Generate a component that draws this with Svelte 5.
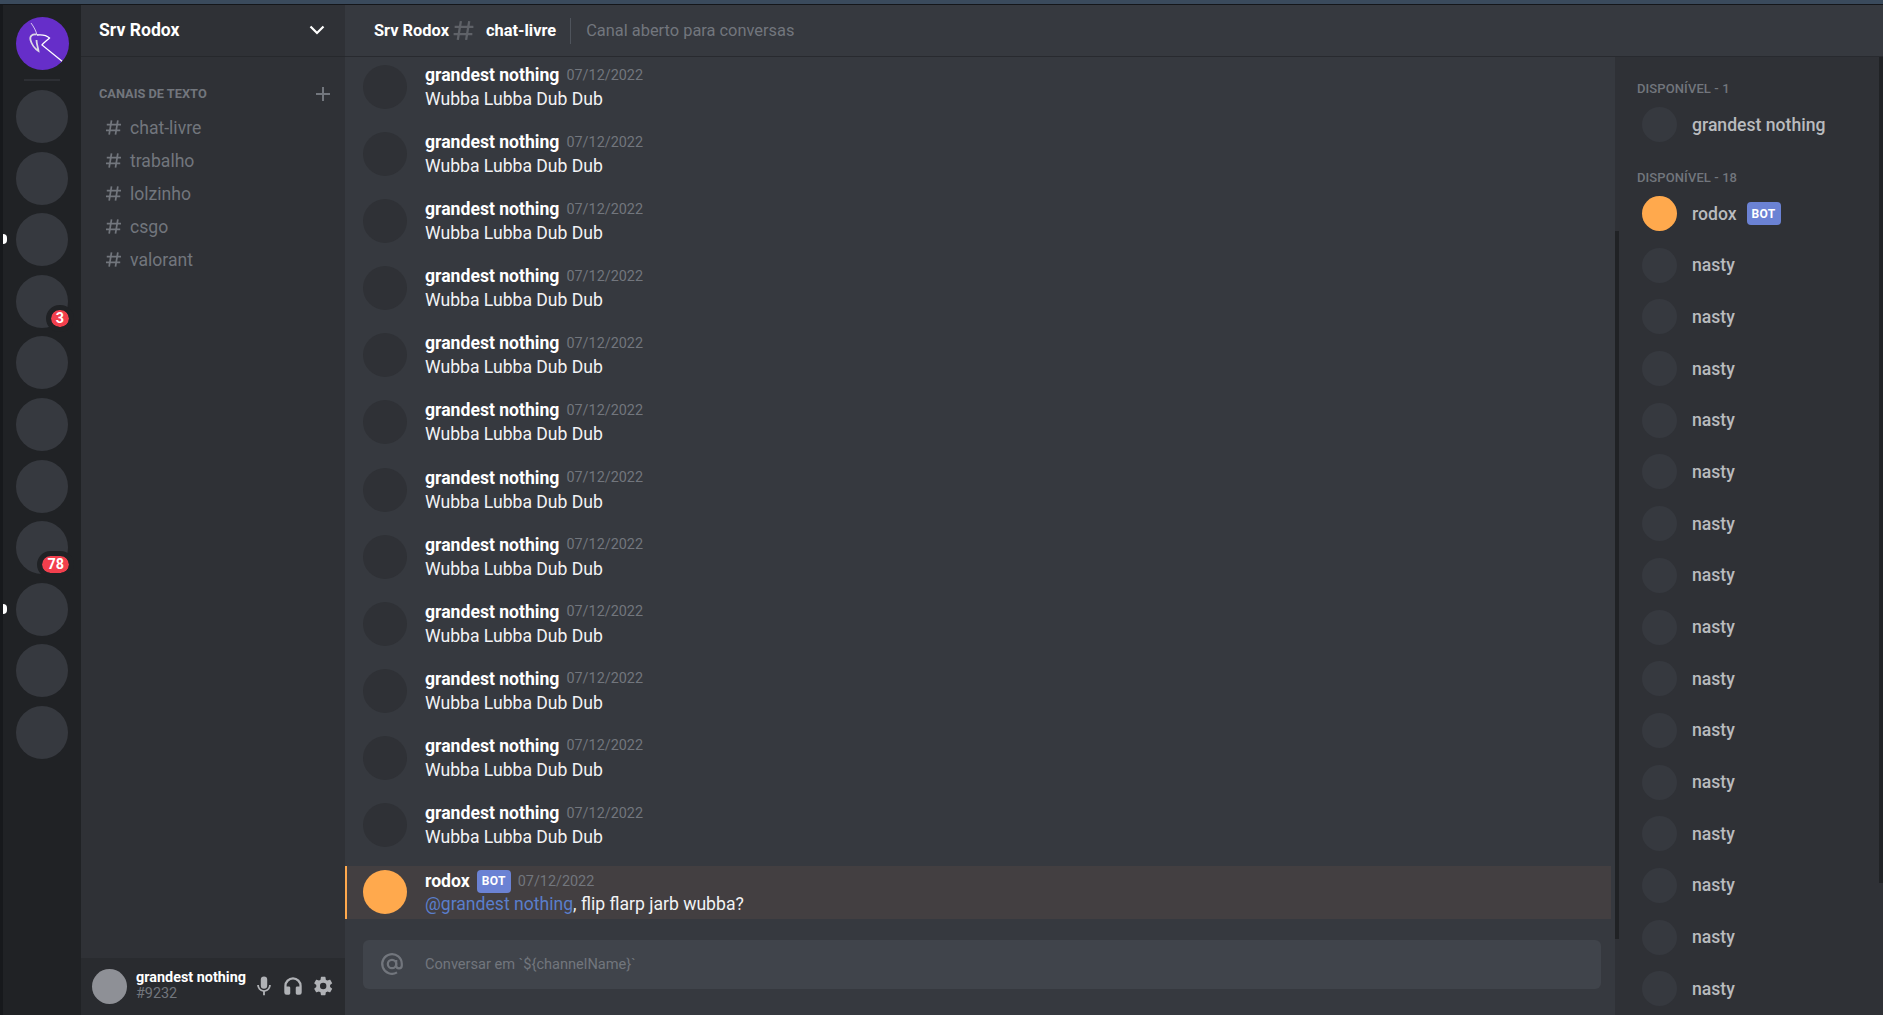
<script lang="ts">
	const servers = [
		{ badge: null, pill: false },
		{ badge: null, pill: false },
		{ badge: null, pill: true },
		{ badge: "3", pill: false },
		{ badge: null, pill: false },
		{ badge: null, pill: false },
		{ badge: null, pill: false },
		{ badge: "78", pill: false },
		{ badge: null, pill: true },
		{ badge: null, pill: false },
		{ badge: null, pill: false }
	]
	const channels = ["chat-livre", "trabalho", "lolzinho", "csgo", "valorant"]
	const messages = Array.from({ length: 12 }, (_, i) => i)
	const nasties = Array.from({ length: 15 }, (_, i) => i)
</script>

{#snippet hash(size)}
	<svg width={size} height={size} viewBox="0 0 24 24" class="hash">
		<path d="M9.5 3 6.5 21M17.5 3l-3 18M3.5 8.5h18M2.5 15.5h18" fill="none" stroke="currentColor" stroke-width="2.2" />
	</svg>
{/snippet}

<div class="page">
	<div class="topline"></div>
	<div class="app">
		<nav class="servers">
			<div class="logo">
				<svg width="53" height="53" viewBox="0 0 53 53">
					<path d="M15 6C18 10 20 14 21 18" stroke="#f2eefa" stroke-width="0.8" fill="none" />
					<path d="M20.500 17.500C16 17 13.500 19 14.500 23C15.500 27 19 32 22.500 34C22 30 20.500 27 20.500 23" stroke="#dcd8e6" stroke-width="1.800" fill="none" />
					<path d="M21 18C26 17.500 31 18.500 33.500 21C31 23.500 28 25.500 26 28L47 45" stroke="#fff" stroke-width="1.300" fill="none" />
				</svg>
			</div>
			<div class="divider"></div>
			{#each servers as s}
				<div class="server">
					{#if s.pill}<span class="pill"></span>{/if}
					<div class="circle"></div>
					{#if s.badge}<span class="badge">{s.badge}</span>{/if}
				</div>
			{/each}
		</nav>

		<aside class="sidebar">
			<header class="srv-head">
				<span>Srv Rodox</span>
				<svg width="20" height="20" viewBox="0 0 20 20"><path d="M3.5 6.500 10 13l6.500-6.500" fill="none" stroke="#fff" stroke-width="2.200" /></svg>
			</header>
			<div class="cat">
				<span>CANAIS DE TEXTO</span>
				<svg width="14" height="14" viewBox="0 0 14 14"><path d="M7 0v14M0 7h14" stroke="#72767d" stroke-width="2" /></svg>
			</div>
			<ul class="channels">
				{#each channels as c}
					<li>{@render hash(19)}<span>{c}</span></li>
				{/each}
			</ul>
			<footer class="user">
				<div class="user-av"></div>
				<div class="user-txt">
					<strong>grandest nothing</strong>
					<span>#9232</span>
				</div>
				<div class="user-icons">
					<svg width="22" height="22" viewBox="0 0 24 24" fill="#b0b2b6"><path d="M12 1.500a3.500 3.500 0 0 0-3.500 3.500v6.500a3.500 3.500 0 0 0 7 0V5A3.500 3.500 0 0 0 12 1.500Z" /><path d="M4.500 11h2a5.500 5.500 0 0 0 11 0h2a7.500 7.500 0 0 1-6.500 7.400V22h-2v-3.600A7.500 7.500 0 0 1 4.500 11Z" /></svg>
					<svg width="22" height="22" viewBox="0 0 24 24" fill="#b0b2b6"><path d="M12 2.500a9.500 9.500 0 0 0-9.500 9.500v7a2.500 2.500 0 0 0 2.500 2.500h2.500A1.500 1.500 0 0 0 9 20v-6a1.500 1.500 0 0 0-1.500-1.500H5V12a7 7 0 0 1 14 0v.5h-2.500A1.500 1.500 0 0 0 15 14v6a1.500 1.500 0 0 0 1.500 1.500H19a2.500 2.500 0 0 0 2.500-2.500v-7A9.500 9.500 0 0 0 12 2.500Z" /></svg>
					<svg width="22" height="22" viewBox="0 0 24 24" fill="#b0b2b6"><path fill-rule="evenodd" d="M19.700 13a7.800 7.800 0 0 0 0-2l2.100-1.600a.5.5 0 0 0 .1-.7l-2-3.400a.5.5 0 0 0-.6-.2l-2.500 1a7.500 7.500 0 0 0-1.700-1l-.4-2.700a.5.5 0 0 0-.5-.4h-4a.5.5 0 0 0-.5.4l-.4 2.700a7.500 7.500 0 0 0-1.700 1l-2.500-1a.5.5 0 0 0-.6.2l-2 3.400a.5.5 0 0 0 .1.700L4.700 11a7.800 7.800 0 0 0 0 2l-2.100 1.600a.5.5 0 0 0-.1.700l2 3.400a.5.5 0 0 0 .6.2l2.500-1a7.500 7.500 0 0 0 1.700 1l.4 2.700a.5.5 0 0 0 .5.400h4a.5.5 0 0 0 .5-.4l.4-2.700a7.500 7.500 0 0 0 1.700-1l2.500 1a.5.5 0 0 0 .6-.2l2-3.400a.5.5 0 0 0-.1-.7ZM12.200 15.500a3.500 3.500 0 1 1 0-7 3.500 3.500 0 0 1 0 7Z" /></svg>
				</div>
			</footer>
		</aside>

		<div class="right">
			<header class="top">
				<strong>Srv Rodox</strong>
				{@render hash(25)}
				<strong class="chan">chat-livre</strong>
				<span class="sep"></span>
				<span class="topic">Canal aberto para conversas</span>
			</header>
			<div class="body">
				<main class="chat">
					<div class="messages">
						{#each messages as m}
							<div class="msg">
								<div class="av"></div>
								<div class="txt">
									<div class="meta"><strong>grandest nothing</strong><time>07/12/2022</time></div>
									<p>Wubba Lubba Dub Dub</p>
								</div>
							</div>
						{/each}
						<div class="msg mention">
							<div class="av orange"></div>
							<div class="txt">
								<div class="meta"><strong>rodox</strong><span class="bot">BOT</span><time>07/12/2022</time></div>
								<p><span class="at">@grandest nothing</span>, flip flarp jarb wubba?</p>
							</div>
						</div>
					</div>
					<div class="inputbar">
						<svg width="24" height="24" viewBox="0 0 24 24" fill="none" stroke="#72767d" stroke-width="2.200"><circle cx="12" cy="12" r="4.200" /><path d="M16.200 8v5.500a2.800 2.800 0 0 0 5.600 0V12A9.800 9.800 0 1 0 17 20.400" /></svg>
						<span>Conversar em `${"{"}channelName}`</span>
					</div>
					<div class="scroll"></div>
				</main>
				<aside class="members">
					<h3 class="first">DISPONÍVEL - 1</h3>
					<div class="member"><div class="m-av"></div><span>grandest nothing</span></div>
					<h3>DISPONÍVEL - 18</h3>
					<div class="member"><div class="m-av bot-av"></div><span>rodox</span><span class="bot">BOT</span></div>
					{#each nasties as n}
						<div class="member"><div class="m-av"></div><span>nasty</span></div>
					{/each}
					<div class="scroll2"></div>
				</aside>
			</div>
		</div>
	</div>
</div>

<style>
	:global(body) {
		margin: 0;
		background: #36393f;
		overflow: hidden;
	}
	* {
		box-sizing: border-box;
	}
	.page {
		height: 1015px;
		width: 1883px;
		display: flex;
		flex-direction: column;
		font-family: Roboto, sans-serif;
		color: #fff;
		overflow: hidden;
	}
	.topline {
		height: 5px;
		flex: none;
		background: #3a4a5c;
		border-bottom: 1px solid #14161a;
	}
	.app {
		flex: 1;
		min-height: 0;
		display: flex;
	}
	.servers {
		width: 81px;
		flex: none;
		background: #202225;
		border-left: 3px solid #17191c;
		padding: 12px 0 0 13px;
	}
	.logo {
		width: 53px;
		height: 53px;
		border-radius: 50%;
		background: #662ec9;
		overflow: hidden;
	}
	.logo svg {
		display: block;
	}
	.divider {
		width: 36px;
		height: 2px;
		background: #2d2f34;
		margin: 9px 0 9px 8px;
	}
	.server {
		position: relative;
		height: 52.8px;
		margin-bottom: 8.8px;
		width: 52px;
	}
	.circle {
		width: 52px;
		height: 53px;
		border-radius: 50%;
		background: #36393f;
	}
	.pill {
		position: absolute;
		left: -13px;
		top: 21px;
		width: 4px;
		height: 10px;
		background: #fff;
		border-radius: 0 5px 5px 0;
	}
	.badge {
		position: absolute;
		right: -6px;
		bottom: -4px;
		min-width: 8px;
		height: 17px;
		padding: 0 5px;
		box-sizing: content-box;
		border: 5px solid #202225;
		border-radius: 14px;
		background: #f23f4d;
		background-clip: padding-box;
		font-size: 14.4px;
		font-weight: 700;
		line-height: 17px;
		text-align: center;
	}
	.sidebar {
		width: 264px;
		flex: none;
		background: #2f3136;
		display: flex;
		flex-direction: column;
	}
	.srv-head {
		height: 52px;
		flex: none;
		display: flex;
		align-items: center;
		justify-content: space-between;
		padding: 0 18px 1px;
		font-size: 17.6px;
		font-weight: 700;
		border-bottom: 1px solid #26282c;
	}
	.cat {
		display: flex;
		align-items: center;
		justify-content: space-between;
		padding: 0 15px 0 18px;
		margin-top: 29px;
		font-size: 12.8px;
		font-weight: 700;
		color: #72767d;
	}
	.channels {
		list-style: none;
		margin: 10px 0 0;
		padding: 0 0 0 23px;
		font-size: 17.6px;
		color: #72767d;
		flex: 1;
	}
	.channels li {
		height: 33px;
		display: flex;
		align-items: center;
		gap: 7px;
	}
	.hash {
		flex: none;
		color: #72767d;
	}
	.user {
		height: 57px;
		flex: none;
		background: #292b2f;
		display: flex;
		align-items: center;
		padding: 0 11px;
	}
	.user-av {
		width: 35px;
		height: 35px;
		border-radius: 50%;
		background: #8e9096;
		flex: none;
	}
	.user-txt {
		margin: 0 0 2px 9px;
		display: flex;
		flex-direction: column;
		font-size: 14.4px;
		line-height: 16px;
	}
	.user-txt span {
		color: #72767d;
	}
	.user-icons {
		margin: 0 0 2px 7px;
		display: flex;
		gap: 7.5px;
	}
	.right {
		flex: 1;
		min-width: 0;
		display: flex;
		flex-direction: column;
	}
	.top {
		height: 52px;
		flex: none;
		display: flex;
		align-items: center;
		padding: 0 0 0 29px;
		font-size: 16.4px;
		border-bottom: 1px solid #282a2f;
	}
	.top .hash {
		margin-left: 2px;
		color: #5f6268;
	}
	.chan {
		margin-left: 10px;
	}
	.sep {
		width: 1px;
		height: 26px;
		background: #4f545c;
		margin: 0 15px 0 14px;
	}
	.topic {
		color: #72767d;
	}
	.body {
		flex: 1;
		min-height: 0;
		display: flex;
	}
	.chat {
		position: relative;
		flex: 1;
		min-width: 0;
		padding-top: 1px;
	}
	.msg {
		height: 67.1px;
		display: flex;
		gap: 18px;
		padding: 7px 0 0 18px;
	}
	.av {
		width: 44px;
		height: 44px;
		border-radius: 50%;
		background: #2f3136;
		flex: none;
	}
	.av.orange {
		background: #ffa94d;
	}
	.txt {
		margin-top: -1px;
	}
	.meta {
		display: flex;
		align-items: center;
		gap: 7px;
		height: 22px;
		font-size: 17.6px;
	}
	.meta time {
		font-size: 14.4px;
		color: #72767d;
	}
	p {
		margin: 2px 0 0;
		font-size: 17.6px;
		line-height: 22px;
		color: #f2f3f5;
	}
	.mention {
		height: 53px;
		margin: 2.8px 4px 0 0;
		padding: 4px 0 0 16px;
		border-left: 2px solid #ffa94d;
		background: #433f41;
	}
	.mention .txt {
		margin-top: 0;
	}
	.mention .meta {
		height: 23px;
	}
	.mention p {
		margin-top: 0;
	}
	.at {
		color: #5a7ecb;
	}
	.bot {
		background: #6b82d4;
		color: #fff;
		font-size: 12px;
		font-weight: 700;
		height: 23px;
		width: 34px;
		border-radius: 4px;
		display: flex;
		align-items: center;
		justify-content: center;
		letter-spacing: 0.3px;
	}
	.inputbar {
		margin: 21px 14px 0 18px;
		height: 49px;
		background: #40444b;
		border-radius: 6px;
		display: flex;
		align-items: center;
		gap: 21px;
		padding: 0 0 0 17px;
		font-size: 14.6px;
		color: #72767d;
	}
	.inputbar span {
		margin-bottom: 1px;
	}
	.scroll {
		position: absolute;
		right: -4px;
		top: 174px;
		width: 4px;
		height: 708px;
		background: #202225;
		z-index: 1;
	}
	.members {
		position: relative;
		width: 268px;
		flex: none;
		background: #2f3136;
		padding: 0 0 0 22px;
		color: #b9bbbe;
	}
	h3 {
		margin: 19.6px 0 1.7px;
		font-size: 13px;
		font-weight: 500;
		letter-spacing: 0.1px;
		color: #72767d;
		height: 16px;
		line-height: 16px;
	}
	h3.first {
		margin-top: 24px;
	}
	.member {
		height: 51.7px;
		display: flex;
		align-items: center;
		gap: 15px;
		padding-left: 5px;
		font-size: 17.6px;
		font-weight: 500;
	}
	.member .bot {
		margin-left: -5px;
	}
	.m-av {
		width: 35px;
		height: 35px;
		border-radius: 50%;
		background: #36393f;
		flex: none;
	}
	.m-av.bot-av {
		background: #ffa94d;
	}
	.scroll2 {
		position: absolute;
		right: 0;
		top: 0;
		bottom: 132px;
		width: 4px;
		background: #202225;
	}
</style>
